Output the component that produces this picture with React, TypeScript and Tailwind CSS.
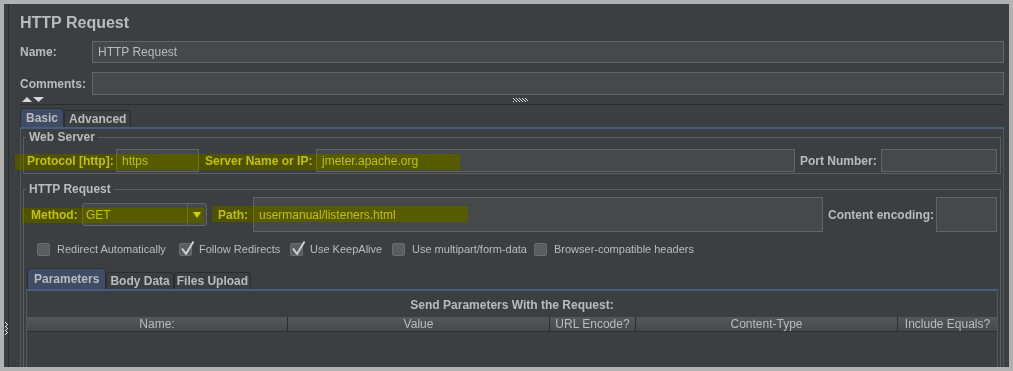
import React from 'react';

const label = 'text-[12px] font-bold text-[#bbbbbb] whitespace-nowrap';
const field = 'bg-[#45494a] border border-[#646464] text-[12px] text-[#bbbbbb] flex items-center px-[5px] whitespace-nowrap overflow-hidden';
const groupTitle = '-mt-[8px] px-[3px] w-fit bg-[#3c3f41] leading-[15px] text-[12px] font-bold text-[#bbbbbb]';

function Highlight({ pos }: { pos: string }) {
  return (
    <>
      <div className={`absolute pointer-events-none bg-[#ffff00] mix-blend-multiply ${pos}`} />
      <div className={`absolute pointer-events-none bg-[#ffff00]/10 ${pos}`} />
    </>
  );
}

function CheckItem({ checked, text, w }: { checked?: boolean; text: string; w: string }) {
  return (
    <div className={`flex items-center gap-[7px] ${w}`}>
      <span className="relative w-[13px] h-[13px] shrink-0 rounded-[2px] bg-[#5a5d5f] border border-[#6b6e70]">
        {checked && (
          <svg className="absolute -top-[4px] -left-[1px] w-[16px] h-[16px]" viewBox="0 0 16 16">
            <path d="M3 8.5 L7 14 L14.5 1.5" stroke="#cfcfcf" strokeWidth="2" fill="none" strokeLinejoin="round" />
          </svg>
        )}
      </span>
      <span className="text-[11px] text-[#bbbbbb] whitespace-nowrap">{text}</span>
    </div>
  );
}

function Tab({ text, active, px }: { text: string; active?: boolean; px: string }) {
  return active ? (
    <div className={`h-full ${px} flex items-center rounded-t-[4px] border border-b-0 border-[#2d3033] bg-[#3e4c66] text-[12px] font-bold text-[#bbbbbb]`}>
      {text}
    </div>
  ) : (
    <div className={`h-[17px] ${px} flex items-center rounded-t-[4px] border border-b-0 border-[#2b2d2f] bg-[#3c3f41] text-[12px] font-bold text-[#bbbbbb]`}>
      {text}
    </div>
  );
}

export default function App() {
  const cols = ['Name:', 'Value', 'URL Encode?', 'Content-Type', 'Include Equals?'];
  return (
    <div className="relative w-[1013px] h-[371px] bg-[#b1b1b1] p-[4px] font-['Liberation_Sans',Arial,sans-serif] overflow-hidden">
      <div className="h-full flex bg-[#3c3f41] overflow-hidden">
        {/* left split grip */}
        <div className="w-[4px] shrink-0 pt-[318px] flex justify-center">
          <svg width="3" height="13" viewBox="0 0 3 13">
            {[0, 2, 4, 6, 8, 10, 12].map((y) => (
              <rect key={y} x={y % 4 === 0 ? 0 : 2} y={y} width="1" height="1" fill="#e8e8e8" />
            ))}
            {[1, 3, 5, 7, 9, 11].map((y) => (
              <rect key={y} x="1" y={y} width="1" height="1" fill="#e8e8e8" />
            ))}
          </svg>
        </div>

        <div className="flex-1 border-l border-[#2b2d2f] pl-[11px] pr-[5px] pt-[8px]">
          <div className="h-[22px] leading-[22px] text-[16px] font-bold text-[#bbbbbb]">HTTP Request</div>

          <div className="mt-[7px] flex items-center h-[22px]">
            <div className={`${label} w-[72px]`}>Name:</div>
            <div className={`${field} flex-1 h-[22px]`}>HTTP Request</div>
          </div>
          <div className="mt-[9px] flex items-center h-[23px]">
            <div className={`${label} w-[72px]`}>Comments:</div>
            <div className={`${field} flex-1 h-[23px]`} />
          </div>

          {/* collapse arrows + drag grip */}
          <div className="h-[10px] border-b border-[#2b2d2f] flex items-start pl-[2px] pt-[2px]">
            <svg width="22" height="5" viewBox="0 0 22 5">
              <polygon points="0,5 5,0 10,5" fill="#d8d8d8" />
              <polygon points="11,0 22,0 16.5,5" fill="#d8d8d8" />
            </svg>
            <svg className="ml-[469px] mt-[1px]" width="15" height="4" viewBox="0 0 15 4">
              {[0, 3, 6, 9, 12].map((x) => (
                <g key={x} fill="#e0e0e0">
                  <rect x={x} y="0" width="1" height="1" />
                  <rect x={x + 1} y="1" width="1" height="1" />
                  <rect x={x + 2} y="2" width="1" height="1" />
                  <rect x={x} y="3" width="1" height="1" />
                </g>
              ))}
            </svg>
          </div>

          {/* Basic / Advanced tabs */}
          <div className="mt-[3px] h-[19px] flex items-end">
            <Tab text="Basic" active px="px-[5px]" />
            <Tab text="Advanced" px="px-[4px]" />
          </div>

          <div className="h-[260px] border-t-2 border-t-[#4a5b7c] border-x border-x-[#55585a] pt-[8px] px-[2px]">
            {/* Web Server */}
            <div className="border border-[#5b5e60] px-[2px] pb-[1px]">
              <div className={groupTitle}>Web Server</div>
              <div className="mt-[4px] h-[23px] flex items-center pr-[1px]">
                <div className={`${label} w-[90px] pl-[1px]`}>Protocol [http]:</div>
                <div className={`${field} w-[83px] h-[23px]`}>https</div>
                <div className={`${label} w-[117px] pl-[6px]`}>Server Name or IP:</div>
                <div className={`${field} flex-1 h-[23px]`}>jmeter.apache.org</div>
                <div className={`${label} w-[86px] pl-[5px]`}>Port Number:</div>
                <div className={`${field} w-[116px] h-[23px]`} />
              </div>
            </div>

            {/* HTTP Request */}
            <div className="mt-[15px] h-[200px] border border-[#5b5e60] px-[2px]">
              <div className={groupTitle}>HTTP Request</div>
              <div className="h-[35px] flex items-center pr-[1px]">
                <div className={`${label} w-[56px] pl-[5px]`}>Method:</div>
                <div className="w-[125px] h-[23px] flex items-stretch rounded-[3px] border border-[#646464] bg-[#45494a]">
                  <div className="flex-1 flex items-center pl-[3px] text-[12px] text-[#bbbbbb]">GET</div>
                  <div className="w-[19px] border-l border-[#646464] flex items-center justify-center">
                    <svg width="8" height="6" viewBox="0 0 8 6">
                      <polygon points="0,0 8,0 4,6" fill="#cfcfcf" />
                    </svg>
                  </div>
                </div>
                <div className={`${label} w-[46px] pl-[11px]`}>Path:</div>
                <div className={`${field} flex-1 h-[35px]`}>usermanual/listeners.html</div>
                <div className={`${label} w-[113px] pl-[5px]`}>Content encoding:</div>
                <div className={`${field} w-[61px] h-[35px]`} />
              </div>

              <div className="mt-[11px] h-[13px] flex items-center pl-[11px]">
                <CheckItem text="Redirect Automatically" w="w-[142px]" />
                <CheckItem text="Follow Redirects" checked w="w-[111px]" />
                <CheckItem text="Use KeepAlive" checked w="w-[102px]" />
                <CheckItem text="Use multipart/form-data" w="w-[142px]" />
                <CheckItem text="Browser-compatible headers" w="w-[180px]" />
              </div>

              {/* Parameters / Body Data / Files Upload */}
              <div className="mt-[12px] h-[21px] pl-[1px] flex items-end">
                <Tab text="Parameters" active px="px-[6px]" />
                <Tab text="Body Data" px="px-[3px]" />
                <Tab text="Files Upload" px="px-[2px]" />
              </div>
              <div className="h-[120px] border-t-2 border-t-[#4a5b7c] border-x border-x-[#55585a]">
                <div className="pt-[6px] h-[22px] leading-[16px] text-center text-[12px] font-bold text-[#bbbbbb]">
                  Send Parameters With the Request:
                </div>
                <div className="mt-[4px] h-[15px] grid grid-cols-[261px_262px_86px_262px_1fr] bg-gradient-to-b from-[#55585a] to-[#45484a] border-b border-[#2e3032]">
                  {cols.map((c, i) => (
                    <div
                      key={c}
                      className={`flex items-center justify-center text-[12px] leading-[14px] text-[#bbbbbb] whitespace-nowrap ${
                        i < cols.length - 1 ? 'border-r border-[#2b2d2f]' : ''
                      }`}
                    >
                      {c}
                    </div>
                  ))}
                </div>
              </div>
            </div>
          </div>
        </div>
      </div>

      {/* yellow highlighter marks */}
      <Highlight pos="left-[15px] top-[154px] w-[445px] h-[16px]" />
      <Highlight pos="left-[22px] top-[208px] w-[182px] h-[15px]" />
      <Highlight pos="left-[212px] top-[206px] w-[256px] h-[16px]" />
    </div>
  );
}
